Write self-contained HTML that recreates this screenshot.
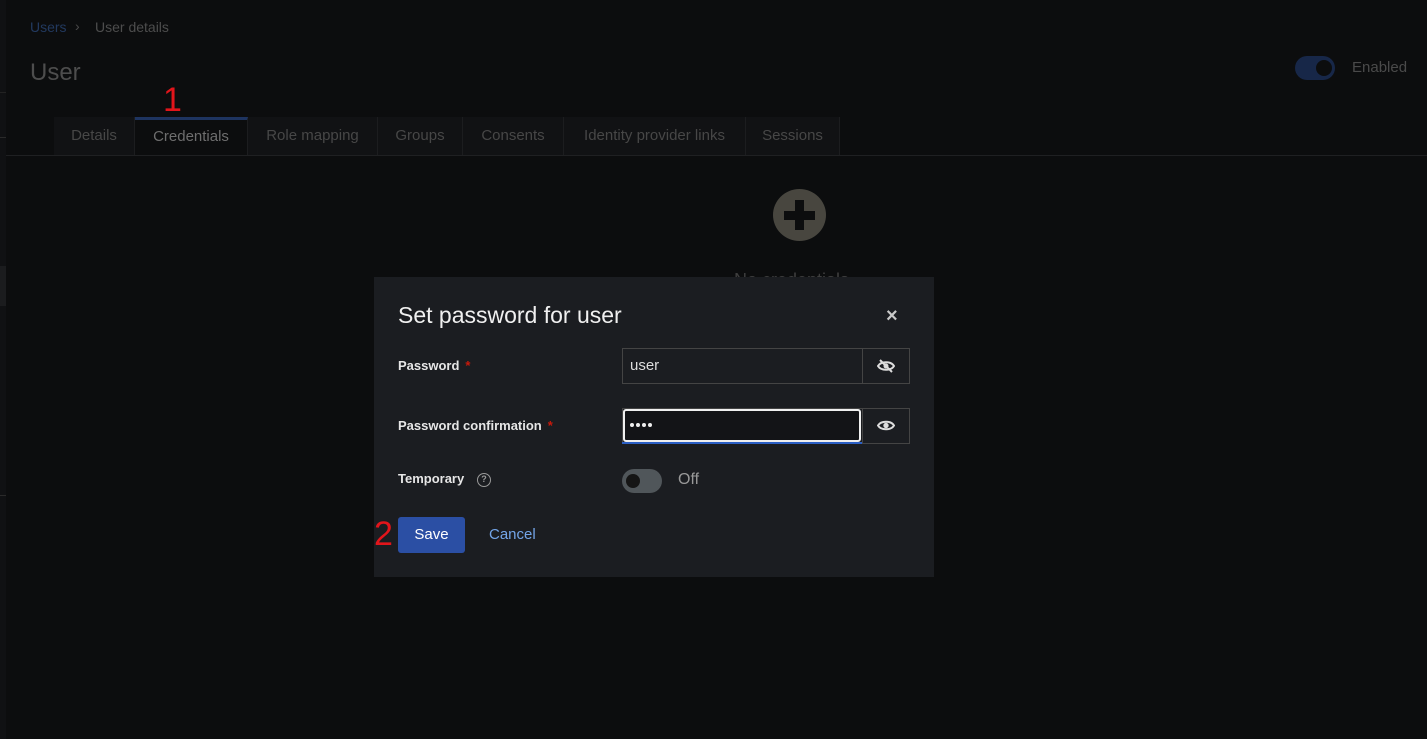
<!DOCTYPE html>
<html><head><meta charset="utf-8"><style>
*{box-sizing:border-box;margin:0;padding:0}
body{width:1427px;height:739px;background:#0c0d0e;font-family:"Liberation Sans",sans-serif;position:relative;overflow:hidden;color:#ccc}
.abs{position:absolute}
.side{left:0;top:0;width:6px;height:739px;background:#101113}
.tab{position:absolute;top:117px;height:38px;background:#111214;border-right:1px solid #1c1d1f;color:#474747;font-size:15px;line-height:38px;text-align:center}
.modal{left:374px;top:277px;width:560px;height:300px;background:#1b1d21}
.lbl{position:absolute;left:24px;font-size:13px;font-weight:bold;color:#e6e6e6}
.req{color:#c9190b;margin-left:6px}
.dot{display:block;width:4px;height:4px;border-radius:50%;background:#eee}
</style></head><body>
<div class="abs side"></div>
<div class="abs" style="left:0;top:92px;width:6px;height:1px;background:#222"></div>
<div class="abs" style="left:0;top:137px;width:6px;height:1px;background:#2a2a2a"></div>
<div class="abs" style="left:0;top:266px;width:6px;height:40px;background:#1b1c1e"></div>
<div class="abs" style="left:0;top:495px;width:6px;height:1px;background:#2a2a2a"></div>
<div class="abs" style="left:30px;top:19px;font-size:14px;color:#22395f">Users</div>
<div class="abs" style="left:75px;top:18px;font-size:14px;color:#4a4a4a">›</div>
<div class="abs" style="left:95px;top:19px;font-size:14px;color:#4d4d4d">User details</div>
<div class="abs" style="left:30px;top:59px;font-size:24px;color:#4d4d4d">User</div>
<div class="abs" style="left:163px;top:80px;font-size:34px;color:#e2151b;line-height:40px">1</div>
<div class="abs" style="left:1295px;top:56px;width:40px;height:24px;border-radius:12px;background:#172748"></div>
<div class="abs" style="left:1316px;top:60px;width:16px;height:16px;border-radius:50%;background:#0c0d0e"></div>
<div class="abs" style="left:1352px;top:59px;font-size:15px;color:#4a4a4a">Enabled</div>
<div class="abs" style="left:6px;top:155px;width:1421px;height:1px;background:#1f2022"></div>
<div class="tab" style="left:54px;width:81px">Details</div>
<div class="tab" style="left:135px;width:113px;background:#0c0d0e;border-top:3px solid #1e3460;line-height:34px;color:#6e6e6e">Credentials</div>
<div class="tab" style="left:248px;width:130px">Role mapping</div>
<div class="tab" style="left:378px;width:85px">Groups</div>
<div class="tab" style="left:463px;width:101px">Consents</div>
<div class="tab" style="left:564px;width:182px">Identity provider links</div>
<div class="tab" style="left:746px;width:94px">Sessions</div>
<div class="abs" style="left:773px;top:189px;width:53px;height:52px;border-radius:50%;background:#48463f"></div>
<div class="abs" style="left:795px;top:200px;width:9px;height:30px;background:#0c0d0e"></div>
<div class="abs" style="left:784px;top:211px;width:31px;height:9px;background:#0c0d0e"></div>
<div class="abs" style="left:734px;top:270px;font-size:18px;color:#3e3e3e">No credentials</div>
<div class="abs" style="left:700px;top:316px;font-size:14px;color:#444">Set a password for this user.</div>
<div class="abs modal">
<div class="abs" style="left:24px;top:25px;font-size:23px;color:#f0f0f0">Set password for user</div>
<div class="abs" style="left:512px;top:28px;font-size:20px;color:#c8c8c8;font-weight:bold">×</div>
<div class="lbl" style="top:81px">Password<span class="req">*</span></div>
<div class="abs" style="left:248px;top:71px;width:288px;height:36px;border:1px solid #444"></div>
<div class="abs" style="left:488px;top:71px;width:1px;height:36px;background:#444"></div>
<div class="abs" style="left:256px;top:80px;font-size:15px;color:#ddd">user</div>
<svg class="abs" style="left:503px;top:82px" width="18" height="14" viewBox="0 0 18 14"><path d="M1 7C4 2 14 2 17 7C14 12 4 12 1 7Z" fill="none" stroke="#ddd" stroke-width="2"/><circle cx="9" cy="7" r="2.5" fill="#ddd"/><path d="M3 1L15 13" stroke="#ddd" stroke-width="2"/></svg>
<div class="lbl" style="top:141px">Password confirmation<span class="req">*</span></div>
<div class="abs" style="left:248px;top:131px;width:288px;height:36px;border:1px solid #444"></div>
<div class="abs" style="left:249px;top:132px;width:238px;height:33px;border:2px solid #f0f0f0;border-radius:3px;background:#131417"></div>
<div class="abs" style="left:248px;top:165px;width:240px;height:2px;background:#2b5fc4"></div>
<div class="abs" style="left:488px;top:131px;width:1px;height:36px;background:#444"></div>
<div class="abs" style="left:256px;top:146px;display:flex;gap:2px"><i class="dot"></i><i class="dot"></i><i class="dot"></i><i class="dot"></i></div>
<svg class="abs" style="left:503px;top:142px" width="18" height="13" viewBox="0 0 18 13"><path d="M1 6.5C4 1.5 14 1.5 17 6.5C14 11.5 4 11.5 1 6.5Z" fill="none" stroke="#ddd" stroke-width="2"/><circle cx="9" cy="6.5" r="2.7" fill="#ddd"/></svg>
<div class="lbl" style="top:194px">Temporary</div>
<div class="abs" style="left:103px;top:196px;width:14px;height:14px;border:1.5px solid #999;border-radius:50%;font-size:9px;color:#999;text-align:center;line-height:11px;font-weight:bold">?</div>
<div class="abs" style="left:248px;top:192px;width:40px;height:24px;border-radius:12px;background:#50565a"></div>
<div class="abs" style="left:252px;top:197px;width:14px;height:14px;border-radius:50%;background:#151515"></div>
<div class="abs" style="left:304px;top:194px;font-size:16px;color:#999">Off</div>
<div class="abs" style="left:0px;top:235px;font-size:34px;color:#e2151b;line-height:44px">2</div>
<div class="abs" style="left:24px;top:240px;width:67px;height:36px;background:#2b4fa4;border-radius:3px;color:#fff;font-size:15px;text-align:center;line-height:36px">Save</div>
<div class="abs" style="left:115px;top:249px;font-size:15px;color:#73a5e8">Cancel</div>
</div>
</body></html>
